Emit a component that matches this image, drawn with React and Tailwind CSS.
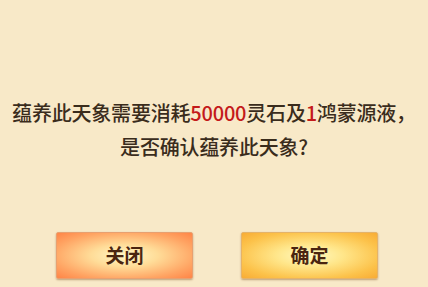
import React from "react";

const font = {
  fontFamily: '"Noto Sans CJK SC", "Noto Sans", sans-serif',
};

const Button = ({ label, variant }) => {
  const skin =
    variant === "close"
      ? "bg-[radial-gradient(ellipse_at_center,#fff8c8_0%,#ffdc98_35%,#ffa463_75%,#ff8547_100%)] border-[#e8a070]"
      : "bg-[radial-gradient(ellipse_at_center,#fffac4_0%,#ffe68a_35%,#fcc24a_75%,#f8ac35_100%)] border-[#e5b368]";
  return (
    <button
      className={`w-[137px] h-[47px] border rounded-[2px] shadow-[0_1px_2px_rgba(120,70,20,0.45)] flex items-center justify-center text-[19px] font-semibold text-[#4a2510] ${skin}`}
    >
      {label}
    </button>
  );
};

export default function App() {
  return (
    <div
      className="w-[428px] h-[287px] bg-[#f8e9c8] flex flex-col items-center"
      style={font}
    >
      <div className="mt-[96px] flex flex-col items-center text-[20px] leading-[34px] font-medium text-[#3a2c1c] tracking-[-0.2px]">
        <p className="whitespace-nowrap">
          蕴养此天象需要消耗<span className="text-[#c41a1a]">50000</span>
          灵石及<span className="text-[#c41a1a]">1</span>鸿蒙源液，
        </p>
        <p>是否确认蕴养此天象?</p>
      </div>
      <div className="mt-[68px] flex gap-[48px] ml-[6px]">
        <Button label="关闭" variant="close" />
        <Button label="确定" variant="ok" />
      </div>
    </div>
  );
}
